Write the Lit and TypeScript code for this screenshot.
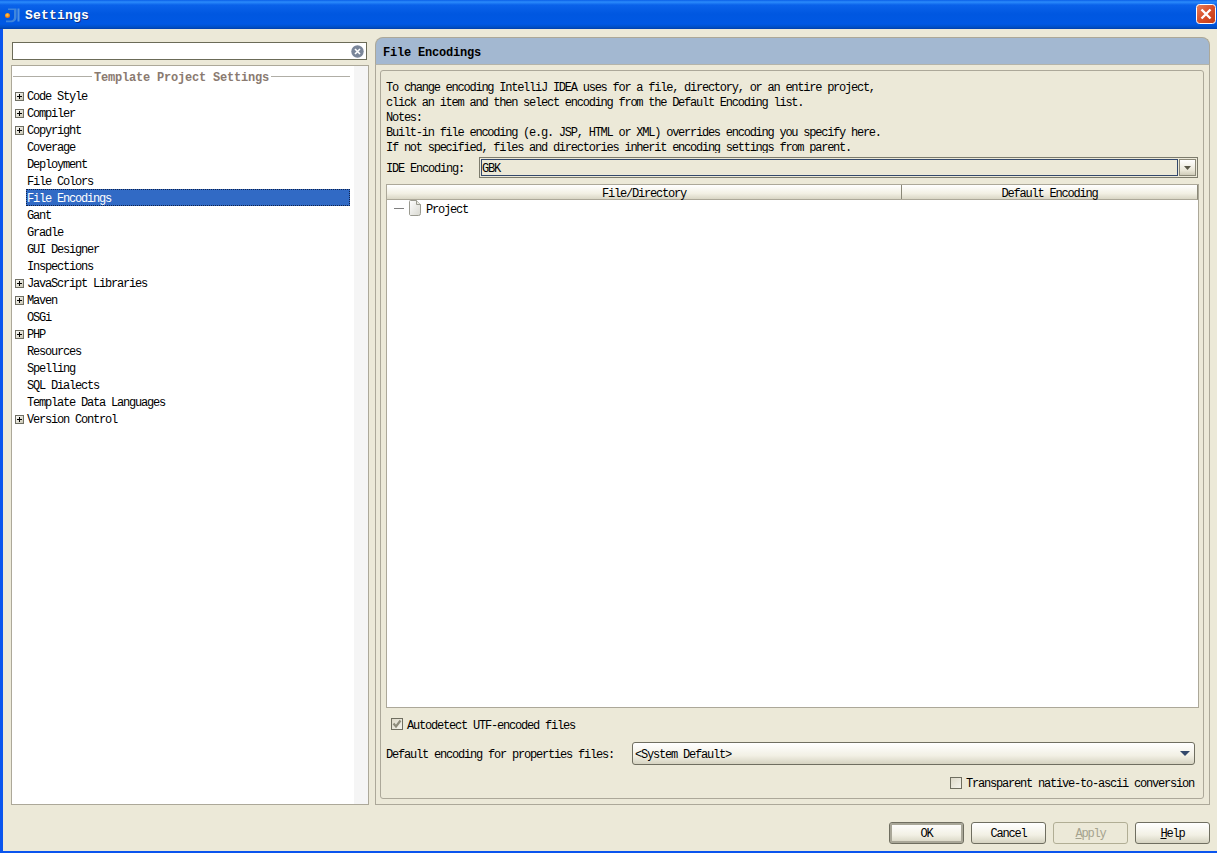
import { LitElement, html, css } from "lit";
import { customElement } from "lit/decorators.js";

const ITEMS: [string, boolean][] = [
  ["Code Style", true], ["Compiler", true], ["Copyright", true], ["Coverage", false],
  ["Deployment", false], ["File Colors", false], ["File Encodings", false], ["Gant", false],
  ["Gradle", false], ["GUI Designer", false], ["Inspections", false], ["JavaScript Libraries", true],
  ["Maven", true], ["OSGi", false], ["PHP", true], ["Resources", false], ["Spelling", false],
  ["SQL Dialects", false], ["Template Data Languages", false], ["Version Control", true],
];

const NOTES = [
  "To change encoding IntelliJ IDEA uses for a file, directory, or an entire project,",
  "click an item and then select encoding from the Default Encoding list.",
  "Notes:",
  "Built-in file encoding (e.g. JSP, HTML or XML) overrides encoding you specify here.",
  "If not specified, files and directories inherit encoding settings from parent.",
];

@customElement("app-root")
export class AppRoot extends LitElement {
  static styles = css`
    :host { display: block; width: 1217px; height: 853px; overflow: hidden; background: #ece9d8;
      font: 12px/15px "Liberation Mono", monospace; letter-spacing: -1.2px; color: #000; }
    * { box-sizing: border-box; }
    .win { height: 853px; display: flex; flex-direction: column; border-bottom: 2px solid #0a55ee; }
    .title { height: 29px; flex: none; display: flex; align-items: center; padding: 0 1px 0 5px;
      background: linear-gradient(#0a5fe8 0, #2b8bfb 2px, #0a62ea 5px, #0057e0 14px, #0058e4 24px, #0050c8 27px, #003fae 29px); }
    .title svg { display: block; }
    .title b { margin: 3px 0 0 5px; color: #fff; font: bold 13px/16px "Liberation Mono", monospace; letter-spacing: .2px; text-shadow: 1px 1px 0 #0f2f80; }
    .close { margin-left: auto; width: 20px; height: 20px; margin-bottom: 1px; }
    .client { flex: 1; min-height: 0; display: flex; flex-direction: column; border-left: 3px solid #0a55ee; padding: 8px 7px 8px 8px; }
    .main { display: grid; grid-template-columns: 358px 835px; column-gap: 6px; height: 768px; }
    .left { display: flex; flex-direction: column; gap: 5px; padding-top: 5px; }
    .search { height: 18px; margin-left: 1px; width: 355px; border: 1px solid #6b6b58; background: #fff; display: flex; align-items: center; justify-content: flex-end; padding-right: 2px; }
    .tree { height: 740px; width: 358px; border: 1px solid #aca899; display: grid; grid-template-columns: 1fr 14px; background: #fff; }
    .scroll { background: #f5f5f5; }
    .list { padding: 2px 4px 0 0; min-width: 0; }
    .sep { height: 17px; display: flex; align-items: center; gap: 2px; margin: 0 0 2px 1px; font-weight: bold; color: #8a7a70; letter-spacing: -.2px; }
    .sep span { padding-top: 4px; }
    .sep::before, .sep::after { content: ""; flex: 1; height: 1px; background: #b0aea6; }
    .row { height: 17px; display: flex; align-items: center; white-space: pre; }
    .row .gut { width: 14px; flex: none; display: flex; }
    .row .t { height: 17px; flex: 1; padding: 2px 0 0; border: 1px solid transparent; line-height: 15px; }
    .row.sel .t { background: #316ac5; color: #fff; border: 1px dotted #10224a; }
    .right { display: flex; flex-direction: column; }
    .phead { height: 28px; flex: none; background: #a3b8d1; border: 1px solid #aca899; border-bottom: 1px solid #b4b4aa; border-radius: 8px 8px 0 0; padding: 7px 7px 0; font-weight: bold; letter-spacing: -.2px; line-height: 16px; }
    .pbody { flex: 1; min-height: 0; border: 1px solid #aca899; border-top: 0; padding: 5px 5px 5px 4px; }
    .group { height: 100%; border: 1px solid #aca899; border-radius: 3px; padding: 10px 4px 0 5px; display: flex; flex-direction: column; }
    .notes { height: 72px; flex: none; overflow: hidden; white-space: pre; letter-spacing: -1.24px; }
    .notes div { height: 15px; }
    .ide { display: flex; align-items: center; height: 21px; flex: none; margin-top: 4px; margin-right: 1px; }
    .ide label { width: 93px; flex: none; white-space: pre; padding-top: 4px; }
    .ide .box { flex: 1; height: 21px; border: 1px solid #7c7b6c; display: flex; padding: 1px; gap: 1px; }
    .ide .val { flex: 1; border: 1px solid #33486b; padding-top: 2px; line-height: 15px; }
    .ide .drop { width: 17px; background: linear-gradient(#fff, #e9e6d7 70%, #cfccb9); border: 1px solid #8a8878; display: flex; align-items: center; justify-content: center; }
    .table { height: 524px; flex: none; margin-top: 6px; border: 1px solid #aca899; background: #fff; display: flex; flex-direction: column; }
    .thead { height: 15px; flex: none; display: grid; grid-template-columns: 514px 1fr; background: linear-gradient(#fff, #f2f0e4 60%, #d9d6c5); border-bottom: 1px solid #aca899; border-right: 1px solid #8a8878; text-align: center; line-height: 19px; }
    .thead div { height: 14px; }
    .thead div + div { border-left: 1px solid #8a8878; }
    .node { height: 17px; display: flex; align-items: center; padding-left: 7px; }
    .node i { width: 10px; height: 1px; background: #808080; margin-right: 4px; }
    .node svg { margin-bottom: 2px; }
    .node span { margin-left: 4px; padding-top: 4px; }
    .auto { display: flex; align-items: center; height: 15px; flex: none; margin-top: 9px; padding-left: 5px; gap: 4px; }
    .auto .cb { margin-bottom: 1px; }
    .auto span, .trans span:last-child, .prop label, .combo span { padding-top: 4px; }
    .cb { width: 12px; height: 12px; flex: none; border: 1px solid #6f6e60; background: linear-gradient(135deg, #ddd9c8, #f4f3ec); display: block; }
    .prop { display: flex; align-items: center; height: 23px; flex: none; margin-top: 10px; margin-right: 4px; }
    .prop label { width: 246px; flex: none; white-space: pre; }
    .prop .combo { flex: 1; height: 23px; border: 1px solid #6f6e60; border-radius: 3px; background: linear-gradient(#fff, #f2f0e4 60%, #d6d3c1); display: flex; align-items: center; justify-content: space-between; padding: 0 4px 0 2px; }
    .trans { display: flex; justify-content: flex-end; align-items: center; height: 15px; flex: none; margin-top: 10px; margin-right: 5px; gap: 4px; }
    .foot { display: flex; justify-content: flex-end; gap: 7px; margin-top: 17px; }
    button { width: 75px; height: 22px; border: 1px solid #6f6e60; border-radius: 3px; padding: 2px 0 0; color: #000;
      background: linear-gradient(#fff, #f2f0e4 60%, #d6d3c1); font: inherit; letter-spacing: inherit; line-height: 15px; }
    button.def { box-shadow: inset 0 0 0 2px #a9a798; }
    button:disabled { color: #a5a38e; border-color: #b1ae95; background: #ece9d8; }
    u { text-decoration: underline; }
  `;

  private plus() {
    return html`<svg width="9" height="9" viewBox="0 0 9 9" style="margin:2px 0 0 3px">
      <defs><linearGradient id="pg" x1="0" y1="0" x2="1" y2="1"><stop offset="0" stop-color="#fff"/><stop offset="1" stop-color="#c6c2ad"/></linearGradient></defs>
      <rect x=".5" y=".5" width="8" height="8" fill="url(#pg)" stroke="#6f6f64"/>
      <path d="M2 4.5h5M4.5 2v5" stroke="#000" fill="none"/></svg>`;
  }

  render() {
    return html`<div class="win">
      <div class="title">
        <svg width="15" height="16" viewBox="0 0 15 16">
          <defs><radialGradient id="ball" cx=".45" cy=".4" r=".6"><stop offset="0" stop-color="#ffd24a"/><stop offset="1" stop-color="#f06a08"/></radialGradient></defs>
          <path d="M3 1.500h8.500V10c0 3.600-2.400 5.300-5.500 5.300H1v-1.700h5c2 0 3-1.400 3-3.600V3H3z" fill="#3f86dc"/>
          <path d="M12.500 1.500h2v13h-2z" fill="#4f93e4"/>
          <circle cx="2.500" cy="8.500" r="2.500" fill="url(#ball)"/>
        </svg>
        <b>Settings</b>
        <svg class="close" viewBox="0 0 20 20">
          <defs><linearGradient id="red" x1="0" y1="0" x2="1" y2="1"><stop offset="0" stop-color="#e8805c"/><stop offset=".5" stop-color="#d8502a"/><stop offset="1" stop-color="#c23a14"/></linearGradient></defs>
          <rect x=".5" y=".5" width="19" height="19" rx="3" fill="url(#red)" stroke="#fff"/>
          <path d="M5.500 5.500l9 9M14.500 5.500l-9 9" stroke="#fff" stroke-width="2.400" fill="none"/>
        </svg>
      </div>
      <div class="client">
        <div class="main">
          <div class="left">
            <div class="search">
              <svg width="13" height="13" viewBox="0 0 13 13">
                <circle cx="6.500" cy="6.500" r="6.200" fill="#7a8699"/>
                <path d="M4 4l5 5M9 4l-5 5" stroke="#fff" stroke-width="1.600"/>
              </svg>
            </div>
            <div class="tree">
              <div class="list">
                <div class="sep"><span>Template Project Settings</span></div>
                ${ITEMS.map(([n, p]) => html`<div class="row ${n === "File Encodings" ? "sel" : ""}">
                  <span class="gut">${p ? this.plus() : ""}</span><span class="t">${n}</span></div>`)}
              </div>
              <div class="scroll"></div>
            </div>
          </div>
          <div class="right">
            <div class="phead">File Encodings</div>
            <div class="pbody">
              <div class="group">
                <div class="notes">${NOTES.map((l) => html`<div>${l}</div>`)}</div>
                <div class="ide">
                  <label>IDE Encoding:</label>
                  <div class="box"><div class="val">GBK</div>
                    <div class="drop"><svg width="7" height="4" viewBox="0 0 7 4"><path d="M0 0h7L3.500 4z" fill="#5a5848"/></svg></div></div>
                </div>
                <div class="table">
                  <div class="thead"><div>File/Directory</div><div>Default Encoding</div></div>
                  <div class="node"><i></i>
                    <svg width="14" height="16" viewBox="0 0 14 16">
                      <defs><linearGradient id="doc" x1="0" y1="0" x2="1" y2="1"><stop offset="0" stop-color="#fff"/><stop offset="1" stop-color="#d8d8d0"/></linearGradient></defs>
                      <path d="M2.500.5h6l4 4v9a2 2 0 0 1-2 2h-8a2 2 0 0 1-1-1V1.500a1 1 0 0 1 1-1z" fill="url(#doc)" stroke="#9a9a90"/>
                      <path d="M8.500.5v4h4" fill="#e8e8e0" stroke="#9a9a90"/>
                    </svg>
                    <span>Project</span></div>
                </div>
                <div class="auto">
                  <svg class="cb" viewBox="0 0 10 10"><path d="M1.500 4.500l2.500 3 4.500-6" fill="none" stroke="#8e8c7c" stroke-width="2.200"/></svg>
                  <span>Autodetect UTF-encoded files</span>
                </div>
                <div class="prop">
                  <label>Default encoding for properties files:</label>
                  <div class="combo"><span>&lt;System Default&gt;</span>
                    <svg width="10" height="5" viewBox="0 0 10 5"><path d="M0 0h10L5 5z" fill="#33486b"/></svg></div>
                </div>
                <div class="trans"><span class="cb"></span><span>Transparent native-to-ascii conversion</span></div>
              </div>
            </div>
          </div>
        </div>
        <div class="foot">
          <button class="def">OK</button>
          <button>Cancel</button>
          <button disabled><u>A</u>pply</button>
          <button><u>H</u>elp</button>
        </div>
      </div>
    </div>`;
  }
}
